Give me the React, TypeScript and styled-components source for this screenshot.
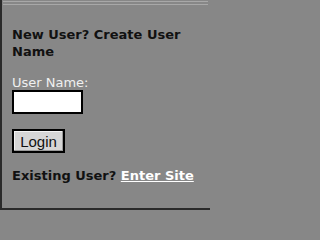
import React from 'react';
import styled, { createGlobalStyle } from 'styled-components';

const GlobalStyle = createGlobalStyle`
  html, body {
    margin: 0;
    padding: 0;
    background-color: #878787;
  }
`;

const Panel = styled.div`
  box-sizing: border-box;
  width: 210px;
  height: 210px;
  border-left: 2px solid #2a2a2a;
  border-bottom: 2px solid #2a2a2a;
  background-color: #878787;
  font-family: 'DejaVu Sans', Verdana, sans-serif;
  display: flex;
  flex-direction: column;
`;

const TopRule = styled.div`
  height: 2px;
  margin: 1px 2px 0 1px;
  border-top: 1px solid #a8a8a8;
  border-bottom: 1px solid #a8a8a8;
`;

const Body = styled.div`
  padding: 21px 10px 0 10px;
  display: flex;
  flex-direction: column;
  align-items: flex-start;
`;

const Heading = styled.h3`
  margin: 0;
  font-size: 13px;
  line-height: 17px;
  font-weight: bold;
  color: #111;
`;

const Label = styled.label`
  margin-top: 16px;
  font-size: 13px;
  line-height: 14px;
  color: #f0f0f0;
`;

const TextInput = styled.input`
  box-sizing: border-box;
  width: 71px;
  height: 24px;
  margin: 0;
  border: 2px solid #000;
  background: #fff;
  padding: 0 3px;
`;

const Button = styled.button`
  box-sizing: border-box;
  width: 53px;
  height: 24px;
  margin-top: 15px;
  border: 2px solid #000;
  background: #d6d6d6;
  box-shadow: inset -1px -1px 0 #9a9a9a, inset 1px 1px 0 #f4f4f4;
  font-family: 'Liberation Sans', Arial, sans-serif;
  font-size: 15px;
  color: #111;
  padding: 0;
`;

const Existing = styled.p`
  margin: 16px 0 0 0;
  font-size: 13px;
  line-height: 14px;
  font-weight: bold;
  color: #111;
`;

const EnterLink = styled.a`
  color: #fff;
  text-decoration: underline;
`;

export default function App() {
  return (
    <>
      <GlobalStyle />
      <Panel>
        <TopRule />
        <Body>
          <Heading>New User? Create User Name</Heading>
          <Label htmlFor="username">User Name:</Label>
          <TextInput id="username" type="text" />
          <Button type="button">Login</Button>
          <Existing>
            Existing User? <EnterLink href="#">Enter Site</EnterLink>
          </Existing>
        </Body>
      </Panel>
    </>
  );
}
